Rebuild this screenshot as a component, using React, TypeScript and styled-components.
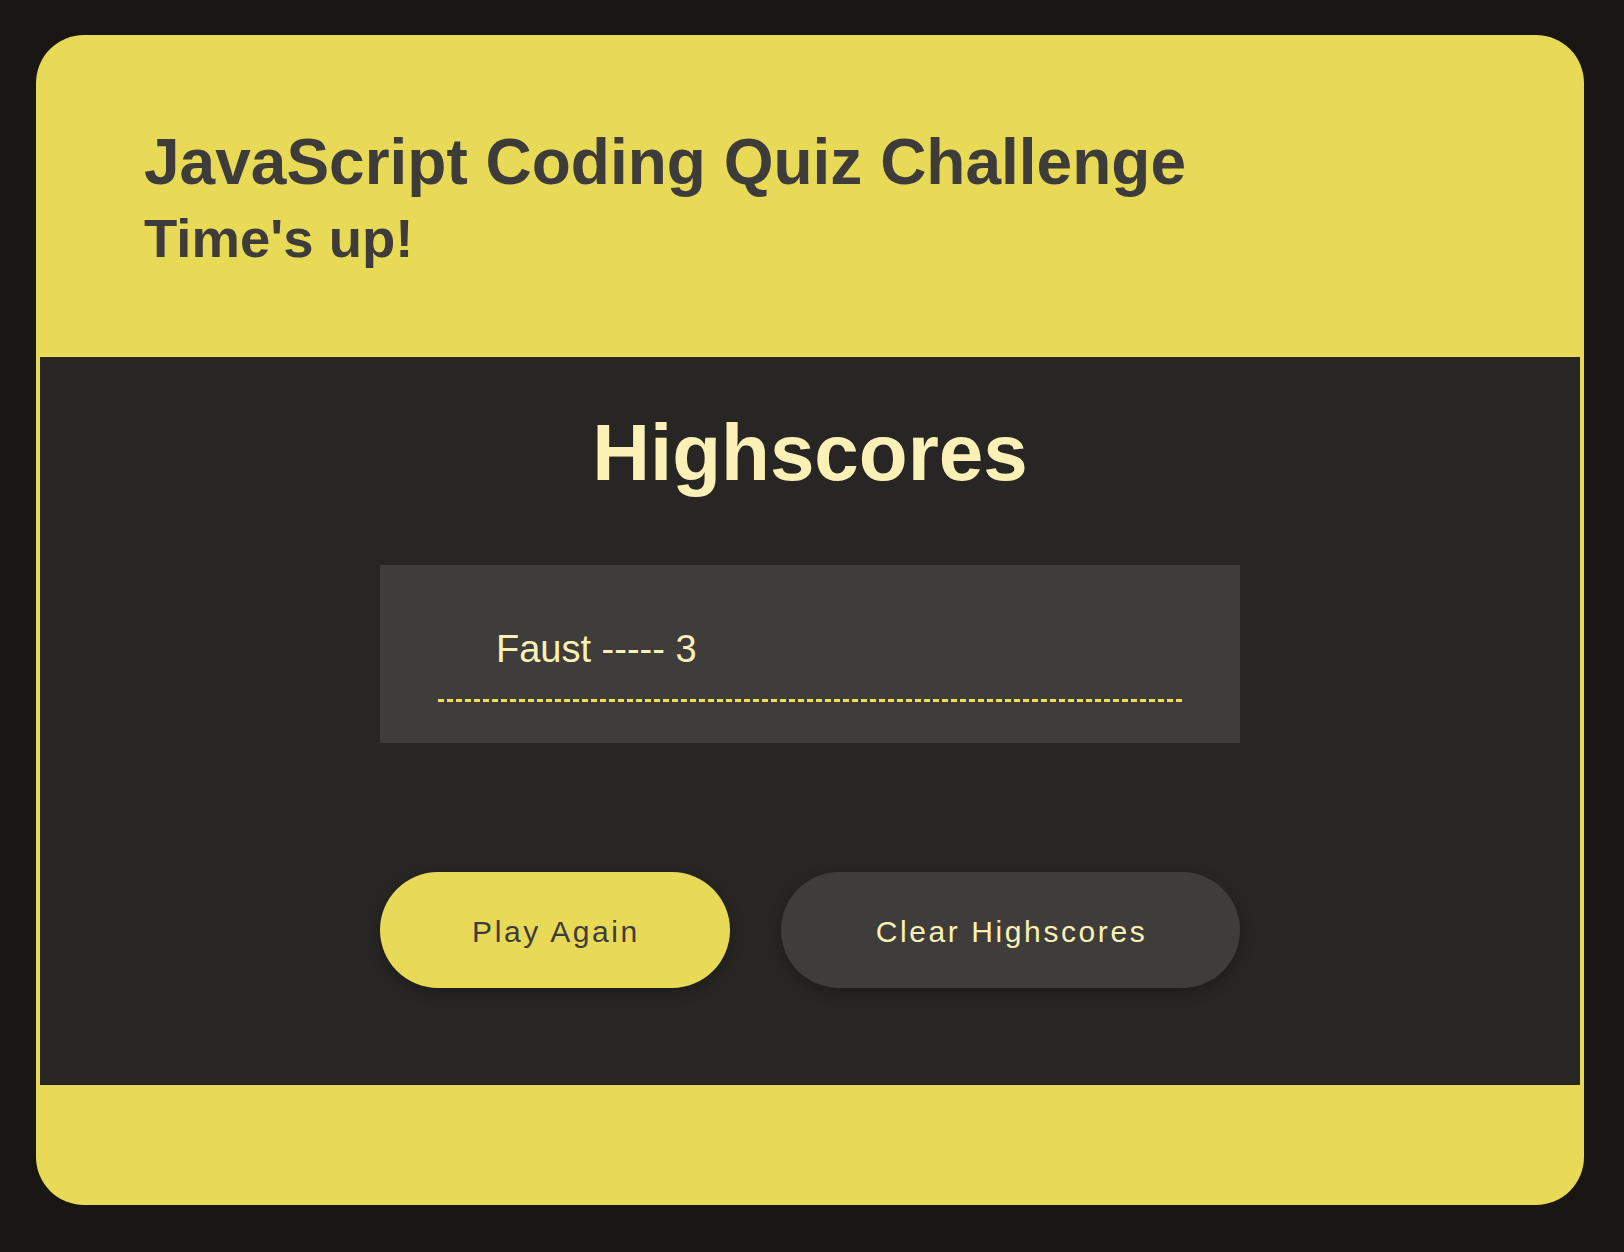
import React from "react";
import styled, { createGlobalStyle } from "styled-components";

const GlobalStyle = createGlobalStyle`
  html, body {
    margin: 0;
    padding: 0;
    background: #1a1613;
  }
  body {
    font-family: "Liberation Sans", Arial, Helvetica, sans-serif;
  }
  * { box-sizing: border-box; }
`;

const Page = styled.div`
  min-height: 1252px;
  padding: 35px 40px 47px 36px;
  background: #1a1613;
`;

const Card = styled.main`
  background: #e8da57;
  border-radius: 48px;
  padding: 0 4px 120px 4px;
  display: flex;
  flex-direction: column;
`;

const Header = styled.header`
  height: 322px;
  padding: 95px 0 0 104px;
  display: flex;
  flex-direction: column;
  gap: 18px;
`;

const Title = styled.h1`
  margin: 0;
  font-size: 64px;
  line-height: 1;
  font-weight: 700;
  color: #3e3c3a;
`;

const Status = styled.h2`
  margin: 0;
  font-size: 54.5px;
  line-height: 1;
  font-weight: 700;
  color: #3e3c3a;
`;

const Panel = styled.section`
  background: #272625;
  height: 728px;
  display: flex;
  flex-direction: column;
  align-items: center;
  padding-top: 56px;
`;

const PanelTitle = styled.h2`
  margin: 0;
  font-size: 80px;
  line-height: 1;
  font-weight: 700;
  color: #fbf0b5;
`;

const ScoreBox = styled.ol`
  list-style: none;
  margin: 72px 0 0 0;
  width: 860px;
  height: 178px;
  background: #3e3d3b;
  padding: 65px 57px 0 58px;
`;

const ScoreItem = styled.li`
  font-size: 38px;
  line-height: 1;
  color: #fbf0b5;
  padding: 0 0 34px 58px;
  background-image: repeating-linear-gradient(
    to right,
    #f0df52 0,
    #f0df52 6px,
    transparent 6px,
    transparent 9px
  );
  background-size: 100% 3px;
  background-repeat: no-repeat;
  background-position: left bottom;
`;

const ButtonRow = styled.div`
  margin-top: 129px;
  width: 860px;
  display: flex;
  justify-content: space-between;
`;

const PillButton = styled.button<{ $variant: "primary" | "secondary"; $width: number }>`
  width: ${(p) => p.$width}px;
  height: 116px;
  border: none;
  border-radius: 58px;
  font-family: "Liberation Sans", Arial, Helvetica, sans-serif;
  font-size: 30px;
  letter-spacing: 2.6px;
  padding: 4px 0 0 2px;
  cursor: pointer;
  background: ${(p) => (p.$variant === "primary" ? "#e8da57" : "#3e3d3b")};
  color: ${(p) => (p.$variant === "primary" ? "#3e3c3a" : "#fbf0b5")};
  box-shadow: 0 4px 14px rgba(0, 0, 0, 0.25);
`;

export default function App() {
  return (
    <>
      <GlobalStyle />
      <Page>
        <Card>
          <Header>
            <Title>JavaScript Coding Quiz Challenge</Title>
            <Status>Time's up!</Status>
          </Header>
          <Panel>
            <PanelTitle>Highscores</PanelTitle>
            <ScoreBox>
              <ScoreItem>Faust ----- 3</ScoreItem>
            </ScoreBox>
            <ButtonRow>
              <PillButton $variant="primary" $width={350}>
                Play Again
              </PillButton>
              <PillButton $variant="secondary" $width={459}>
                Clear Highscores
              </PillButton>
            </ButtonRow>
          </Panel>
        </Card>
      </Page>
    </>
  );
}
